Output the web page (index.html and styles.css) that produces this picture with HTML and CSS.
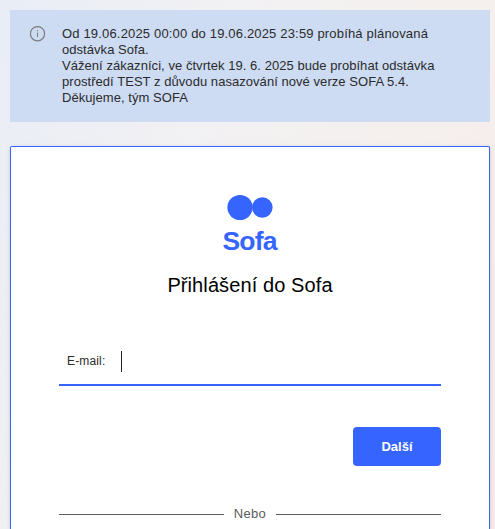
FILE: index.html
```
<!DOCTYPE html>
<html lang="cs">
<head>
    <meta charset="utf-8">
    <title>Přihlášení do Sofa</title>
    <link rel="stylesheet" href="styles.css">
</head>
<body>
    <div class="alert">
        <svg class="alert__icon" width="16" height="16" viewBox="0 0 16 16">
            <circle cx="7.5" cy="7.7" r="7.1" fill="none" stroke="#7d7d7d" stroke-width="1.2" />
            <path d="M7.5 6.5v4.5M7.5 4v1.3" stroke="#7d7d7d" stroke-width="1" />
        </svg>
        <div class="alert__text">
            <span class="alert__line">Od 19.06.2025 00:00 do 19.06.2025 23:59 probíhá plánovaná</span> odstávka Sofa.<br>
            Vážení zákazníci, ve čtvrtek 19. 6. 2025 bude probíhat odstávka prostředí TEST z důvodu nasazování nové verze SOFA 5.4.<br>
            Děkujeme, tým SOFA
        </div>
    </div>

    <div class="login">
        <svg class="login__logo" width="60" height="66" viewBox="-2 0 60 66">
            <circle cx="18" cy="13.5" r="12.6" />
            <circle cx="40.3" cy="13.5" r="10.3" />
            <text x="0.5" y="56" textLength="55">Sofa</text>
        </svg>
        <h1 class="login__title">Přihlášení do Sofa</h1>
        <form>
            <div class="field">
                <label class="field__label">E-mail:</label>
                <span class="field__caret"></span>
            </div>
            <div class="login__actions">
                <button type="button" class="button">Další</button>
            </div>
        </form>
        <div class="divider">Nebo</div>
    </div>
</body>
</html>
```

FILE: styles.css
```
body {
    margin: 0;
    padding: 10px 5px 0 10px;
    height: 529px;
    box-sizing: border-box;
    background: linear-gradient(110deg, #e9edf6 0%, #f2f1f3 35%, #f5f0ee 65%, #f6ebe9 100%);
    font-family: "Liberation Sans", Arial, sans-serif;
    color: #2b2b2b;
}

.alert {
    display: flex;
    height: 112px;
    padding: 16px 20px 0;
    box-sizing: border-box;
    background: #cddcf3;
}
.alert__icon {
    flex: none;
    margin-right: 16px;
}
.alert__text {
    width: 385px;
    font-size: 13px;
    letter-spacing: .05px;
    line-height: 16px;
}
.alert__line {
    letter-spacing: .17px;
}

.login {
    height: 383px;
    margin-top: 24px;
    padding: 47px 48px 0;
    box-sizing: border-box;
    border: 1px solid #3564ff;
    border-bottom: 0;
    border-radius: 2px 2px 0 0;
    background: #fff;
    box-shadow: 0 1px 4px rgba(0, 0, 0, .15);
}
.login__logo {
    display: block;
    margin: 0 auto;
    fill: #3564ff;
    font-size: 26.5px;
    font-weight: bold;
}
.login__title {
    margin: 13px 0 0;
    color: #000;
    font-size: 20px;
    font-weight: normal;
    letter-spacing: .1px;
    line-height: 24px;
    text-align: center;
}

.field {
    display: flex;
    align-items: center;
    height: 49px;
    margin-top: 40px;
    padding: 1px 8px 0;
    border-bottom: 2px solid #3564ff;
    box-sizing: border-box;
}
.field__label {
    width: 54px;
    font-size: 12px;
    letter-spacing: .15px;
}
.field__caret {
    width: 1px;
    height: 21px;
    background: #222;
}

.login__actions {
    display: flex;
    justify-content: flex-end;
    margin-top: 41px;
}
.button {
    width: 88px;
    height: 39px;
    padding: 0;
    border: 0;
    border-radius: 4px;
    background: #3564ff;
    color: #fff;
    font: bold 13px "Liberation Sans", Arial, sans-serif;
}

.divider {
    display: flex;
    align-items: center;
    gap: 10px;
    margin-top: 40px;
    color: #5c5c5c;
    font-size: 13px;
    letter-spacing: .3px;
    line-height: 16px;
}
.divider:before,
.divider:after {
    content: "";
    flex: 1;
    height: 1px;
    background: #5c5c5c;
}
```
